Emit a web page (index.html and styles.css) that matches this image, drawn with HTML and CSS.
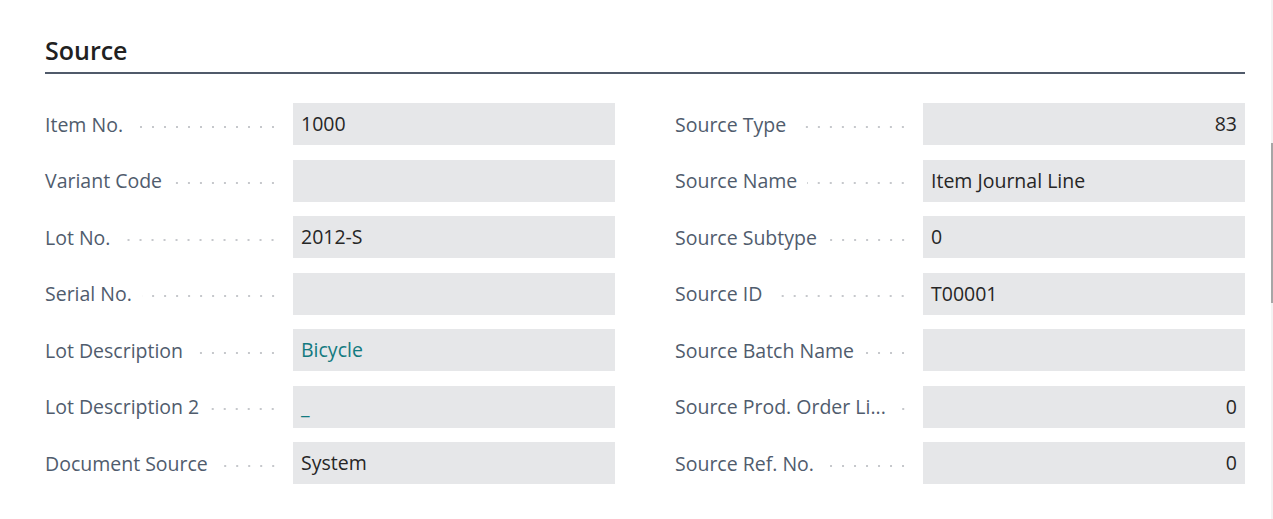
FILE: index.html
```html
<!DOCTYPE html>
<html>
<head>
<meta charset="utf-8">
<link rel="stylesheet" href="styles.css">
</head>
<body>
<div class="page">
  <h2 class="title">Source</h2>
  <div class="grid">
    <div class="col">
      <div class="row"><div class="label"><span class="txt">Item No.</span><span class="dots"></span></div><div class="box">1000</div></div>
      <div class="row"><div class="label"><span class="txt">Variant Code</span><span class="dots"></span></div><div class="box"></div></div>
      <div class="row"><div class="label"><span class="txt">Lot No.</span><span class="dots"></span></div><div class="box">2012-S</div></div>
      <div class="row"><div class="label"><span class="txt">Serial No.</span><span class="dots"></span></div><div class="box"></div></div>
      <div class="row"><div class="label"><span class="txt">Lot Description</span><span class="dots"></span></div><div class="box link">Bicycle</div></div>
      <div class="row"><div class="label"><span class="txt">Lot Description 2</span><span class="dots"></span></div><div class="box link">_</div></div>
      <div class="row"><div class="label"><span class="txt">Document Source</span><span class="dots"></span></div><div class="box">System</div></div>
    </div>
    <div class="col">
      <div class="row"><div class="label"><span class="txt">Source Type</span><span class="dots"></span></div><div class="box num">83</div></div>
      <div class="row"><div class="label"><span class="txt">Source Name</span><span class="dots"></span></div><div class="box">Item Journal Line</div></div>
      <div class="row"><div class="label"><span class="txt">Source Subtype</span><span class="dots"></span></div><div class="box">0</div></div>
      <div class="row"><div class="label"><span class="txt">Source ID</span><span class="dots"></span></div><div class="box">T00001</div></div>
      <div class="row"><div class="label"><span class="txt">Source Batch Name</span><span class="dots"></span></div><div class="box"></div></div>
      <div class="row"><div class="label"><span class="txt">Source Prod. Order Li...</span><span class="dots"></span></div><div class="box num">0</div></div>
      <div class="row"><div class="label"><span class="txt">Source Ref. No.</span><span class="dots"></span></div><div class="box num">0</div></div>
    </div>
  </div>
</div>
<div class="scrolltrack"><div class="thumb"></div></div>
</body>
</html>
```
FILE: styles.css
```css
html, body {
  margin: 0;
  padding: 0;
  background: #ffffff;
  font-family: "Open Sans", "Noto Sans", sans-serif;
}
.page {
  padding: 30px 28px 0 45px;
}
.title {
  margin: 0;
  font-size: 25px;
  font-weight: 600;
  color: #212121;
  line-height: 40px;
  padding-bottom: 2px;
  border-bottom: 2px solid #505a6a;
}
.grid {
  display: grid;
  grid-template-columns: 1fr 1fr;
  column-gap: 60px;
  margin-top: 29px;
}
.col {
  display: flex;
  flex-direction: column;
  gap: 14.5px;
}
.row {
  display: flex;
  height: 42px;
  align-items: center;
}
.label {
  width: 248px;
  flex: none;
  display: flex;
  align-items: center;
  padding-right: 14px;
  box-sizing: border-box;
  color: #505c6d;
  font-size: 19.5px;
  white-space: nowrap;
}
.dots {
  flex: 1;
  height: 4px;
  margin-left: 10px;
  margin-top: 5px;
  background-image: radial-gradient(circle, #c6c8cc 1px, transparent 1.3px);
  background-size: 12px 4px;
  background-repeat: repeat-x;
  background-position: right center;
}
.box {
  flex: 1;
  height: 42px;
  background: #e6e7e9;
  color: #262626;
  font-size: 19.5px;
  line-height: 42px;
  padding: 0 8px;
  box-sizing: border-box;
}
.box.link {
  color: #137a80;
}
.box.num {
  text-align: right;
}
.scrolltrack {
  position: absolute;
  top: 0;
  right: 0;
  width: 2px;
  height: 519px;
  background: #f3f3f3;
}
.thumb {
  position: absolute;
  top: 143px;
  left: 0;
  width: 2px;
  height: 160px;
  background: #a6a6a6;
}
```
